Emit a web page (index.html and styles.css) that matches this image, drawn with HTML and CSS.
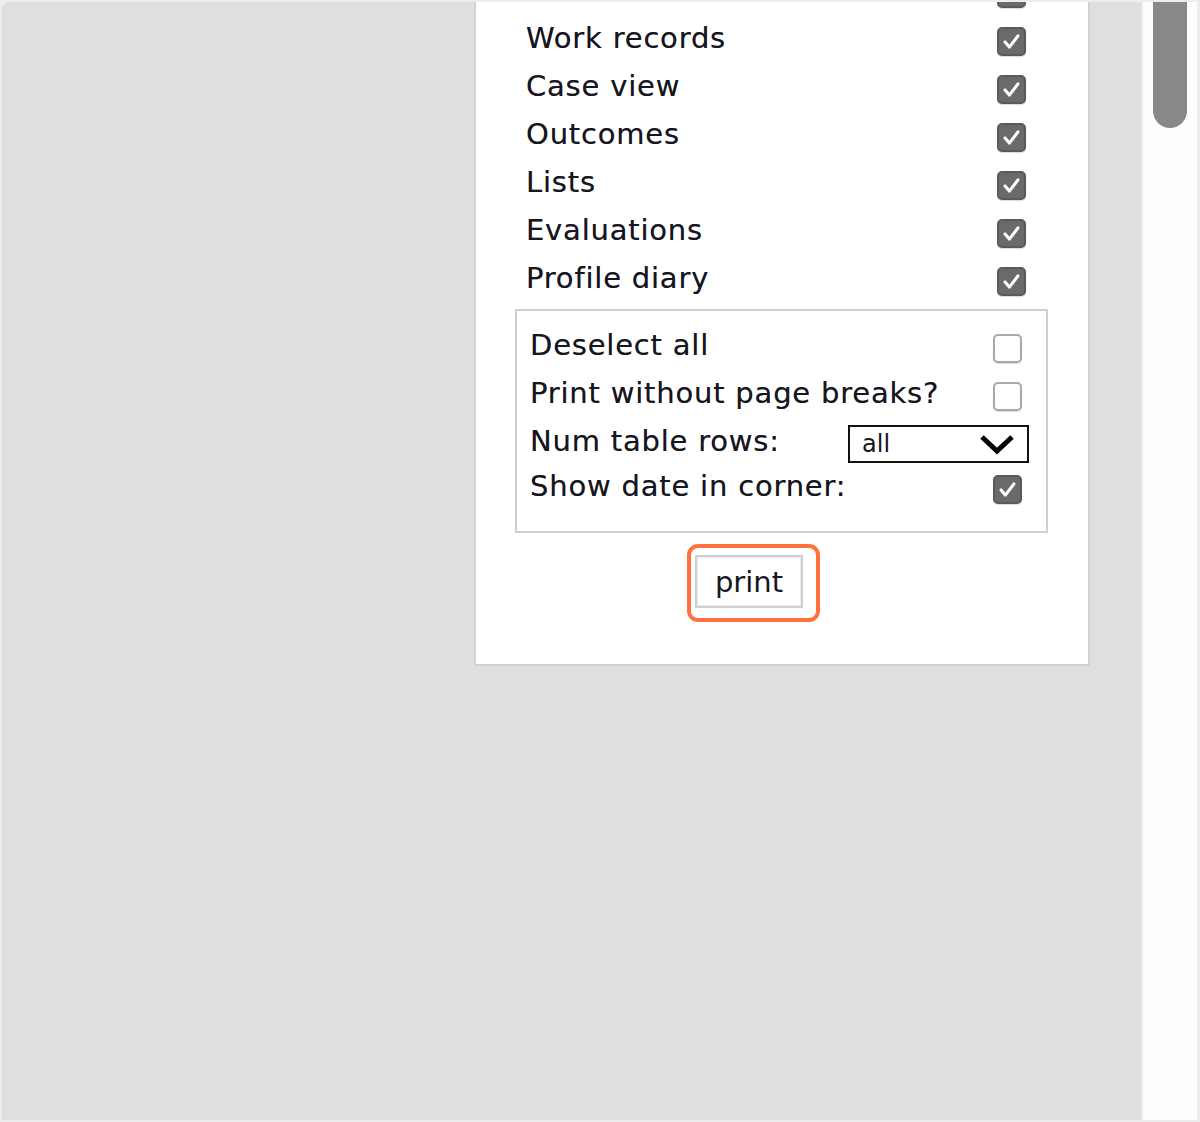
FILE: index.html
```html
<!DOCTYPE html>
<html>
<head>
<meta charset="utf-8">
<link rel="stylesheet" href="styles.css">
</head>
<body>
<div class="frame">
  <div class="main">
    <div class="panel">
      <div class="row"><span class="label"></span><span class="cb checked"><svg viewBox="0 0 29 29"><path d="M7 15 L12 21 L22 8" /></svg></span></div>
      <div class="row"><span class="label">Work records</span><span class="cb checked"><svg viewBox="0 0 29 29"><path d="M7 15 L12 21 L22 8" /></svg></span></div>
      <div class="row"><span class="label">Case view</span><span class="cb checked"><svg viewBox="0 0 29 29"><path d="M7 15 L12 21 L22 8" /></svg></span></div>
      <div class="row"><span class="label">Outcomes</span><span class="cb checked"><svg viewBox="0 0 29 29"><path d="M7 15 L12 21 L22 8" /></svg></span></div>
      <div class="row"><span class="label">Lists</span><span class="cb checked"><svg viewBox="0 0 29 29"><path d="M7 15 L12 21 L22 8" /></svg></span></div>
      <div class="row"><span class="label">Evaluations</span><span class="cb checked"><svg viewBox="0 0 29 29"><path d="M7 15 L12 21 L22 8" /></svg></span></div>
      <div class="row"><span class="label">Profile diary</span><span class="cb checked"><svg viewBox="0 0 29 29"><path d="M7 15 L12 21 L22 8" /></svg></span></div>

      <div class="options">
        <div class="orow"><span class="label">Deselect all</span><span class="cb"></span></div>
        <div class="orow"><span class="label">Print without page breaks?</span><span class="cb"></span></div>
        <div class="orow"><span class="label">Num table rows:</span>
          <span class="select"><span class="sel-text">all</span><svg class="chev" viewBox="0 0 36 22"><path d="M3 4 L18 18 L33 4" /></svg></span>
        </div>
        <div class="orow short"><span class="label">Show date in corner:</span><span class="cb checked"><svg viewBox="0 0 29 29"><path d="M7 15 L12 21 L22 8" /></svg></span></div>
      </div>

      <div class="highlight"><button class="print-btn">print</button></div>
    </div>
  </div>
  <div class="scrollbar"><div class="thumb"></div></div>
</div>
</body>
</html>
```

FILE: styles.css
```css
html, body {
  margin: 0;
  padding: 0;
}
body {
  background: #ededef;
  font-family: "DejaVu Sans", sans-serif;
  color: #16161e;
}
.frame {
  display: flex;
  height: 1118px;
  margin: 2px 3px 2px 2px;
  overflow: hidden;
}
.main {
  flex: 1;
  background: #dfdfdf;
  border-top-left-radius: 8px;
  overflow: hidden;
}
.scrollbar {
  width: 54px;
  background: #fdfdfd;
  border-left: 2px solid #ebebeb;
  display: flex;
  justify-content: center;
}
.thumb {
  width: 34px;
  height: 130px;
  margin-top: -4px;
  background: #888888;
  border-radius: 0 0 17px 17px;
}
.panel {
  margin: -60px 0 0 472px;
  width: 612px;
  background: #ffffff;
  border: 2px solid #d2d2d2;
  padding: 25px 0 42px 0;
}
.row {
  height: 48px;
  display: flex;
  align-items: center;
  justify-content: space-between;
  padding: 0 62px 0 50px;
}
.label {
  font-size: 29px;
  letter-spacing: 0.8px;
  margin-bottom: 6px;
  text-shadow: 0 0 0.6px rgba(20,20,40,0.6);
}
.cb {
  width: 29px;
  height: 29px;
  box-sizing: border-box;
  border: 2px solid #a9a9a9;
  border-radius: 5px;
  background: #fff;
  box-shadow: 0 1px 1px rgba(0,0,0,0.15);
  display: block;
}
.cb.checked {
  background: #6a6a6a;
  border-color: #5a5a5a;
}
.cb svg {
  display: block;
  width: 25px;
  height: 25px;
}
.cb svg path {
  fill: none;
  stroke: #ffffff;
  stroke-width: 3.6;
  stroke-linecap: round;
  stroke-linejoin: round;
}
.options {
  margin: 4px 40px 0 39px;
  border: 2px solid #cfcfcf;
  padding: 13px 24px 21px 13px;
}
.orow {
  height: 48px;
  display: flex;
  align-items: center;
  justify-content: space-between;
}
.orow.short {
  height: 42px;
}
.select {
  width: 181px;
  height: 38px;
  box-sizing: border-box;
  border: 2px solid #111;
  margin-right: -7px;
  display: flex;
  align-items: center;
  justify-content: space-between;
  padding: 0 12px 0 12px;
}
.sel-text {
  font-size: 24px;
}
.chev {
  width: 36px;
  height: 22px;
}
.chev path {
  fill: none;
  stroke: #000;
  stroke-width: 5;
}
.highlight {
  margin: 11px 0 0 211px;
  width: 108px;
  border: 4px solid #ff7240;
  border-radius: 11px;
  padding: 7px 13px 10px 4px;
}
.print-btn {
  display: block;
  width: 108px;
  height: 53px;
  background: #fff;
  border: 2px solid #d0d0d0;
  box-shadow: inset 0 0 0 1px #ececec;
  font-family: "DejaVu Sans", sans-serif;
  font-size: 29px;
  color: #16161e;
  padding: 0;
}
```
